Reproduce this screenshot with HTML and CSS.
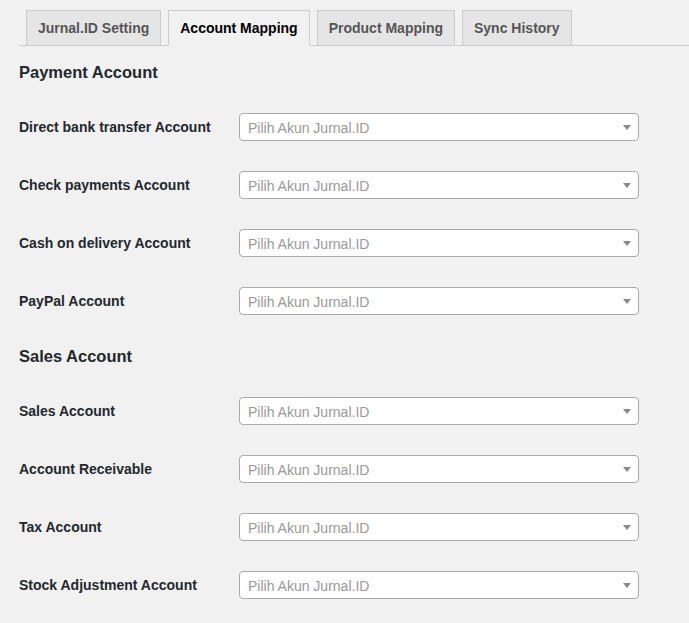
FILE: index.html
```html
<!DOCTYPE html>
<html>
<head>
<meta charset="utf-8">
<link rel="stylesheet" href="styles.css">
</head>
<body>
<div class="wrap">
  <nav class="tabs">
    <span class="tab">Jurnal.ID Setting</span>
    <span class="tab active">Account Mapping</span>
    <span class="tab">Product Mapping</span>
    <span class="tab">Sync History</span>
  </nav>

  <h2 class="section">Payment Account</h2>
  <div class="form">
    <div class="row"><div class="label">Direct bank transfer Account</div><div class="select"><span class="ph">Pilih Akun Jurnal.ID</span><span class="arrow"></span></div></div>
    <div class="row"><div class="label">Check payments Account</div><div class="select"><span class="ph">Pilih Akun Jurnal.ID</span><span class="arrow"></span></div></div>
    <div class="row"><div class="label">Cash on delivery Account</div><div class="select"><span class="ph">Pilih Akun Jurnal.ID</span><span class="arrow"></span></div></div>
    <div class="row"><div class="label">PayPal Account</div><div class="select"><span class="ph">Pilih Akun Jurnal.ID</span><span class="arrow"></span></div></div>
  </div>

  <h2 class="section">Sales Account</h2>
  <div class="form">
    <div class="row"><div class="label">Sales Account</div><div class="select"><span class="ph">Pilih Akun Jurnal.ID</span><span class="arrow"></span></div></div>
    <div class="row"><div class="label">Account Receivable</div><div class="select"><span class="ph">Pilih Akun Jurnal.ID</span><span class="arrow"></span></div></div>
    <div class="row"><div class="label">Tax Account</div><div class="select"><span class="ph">Pilih Akun Jurnal.ID</span><span class="arrow"></span></div></div>
    <div class="row"><div class="label">Stock Adjustment Account</div><div class="select"><span class="ph">Pilih Akun Jurnal.ID</span><span class="arrow"></span></div></div>
  </div>
</div>
</body>
</html>
```

FILE: styles.css
```css
html, body {
  margin: 0;
  padding: 0;
  background: #f1f1f1;
  font-family: "Liberation Sans", Arial, sans-serif;
  color: #23282d;
}

.wrap {
  padding: 10px 0 0 19px;
}

.tabs {
  display: flex;
  align-items: flex-end;
  border-bottom: 1px solid #ccc;
  height: 35px;
}

.tab {
  margin-left: 7px;
  margin-bottom: -1px;
  padding: 5px 11px;
  border: 1px solid #ccc;
  background: #e5e5e5;
  color: #555;
  font-size: 14px;
  font-weight: 700;
  line-height: 24px;
  white-space: nowrap;
}

.tab.active {
  background: #f1f1f1;
  border-bottom-color: #f1f1f1;
  color: #000;
}

.section {
  margin: 16px 0;
  font-size: 16.5px;
  line-height: 20px;
  font-weight: 700;
  color: #23282d;
}

.row {
  display: flex;
  align-items: center;
  height: 58px;
}

.label {
  width: 220px;
  flex: none;
  font-size: 14px;
  font-weight: 700;
  color: #23282d;
}

.select {
  position: relative;
  box-sizing: border-box;
  width: 400px;
  height: 28px;
  border: 1px solid #aaa;
  border-radius: 4px;
  background: #fff;
  display: flex;
  align-items: center;
  padding: 1px 0 0 8px;
}

.ph {
  font-size: 14px;
  color: #999;
}

.arrow {
  position: absolute;
  right: 7px;
  top: 11px;
  width: 0;
  height: 0;
  border-style: solid;
  border-width: 5px 4px 0 4px;
  border-color: #888 transparent transparent transparent;
}
```
